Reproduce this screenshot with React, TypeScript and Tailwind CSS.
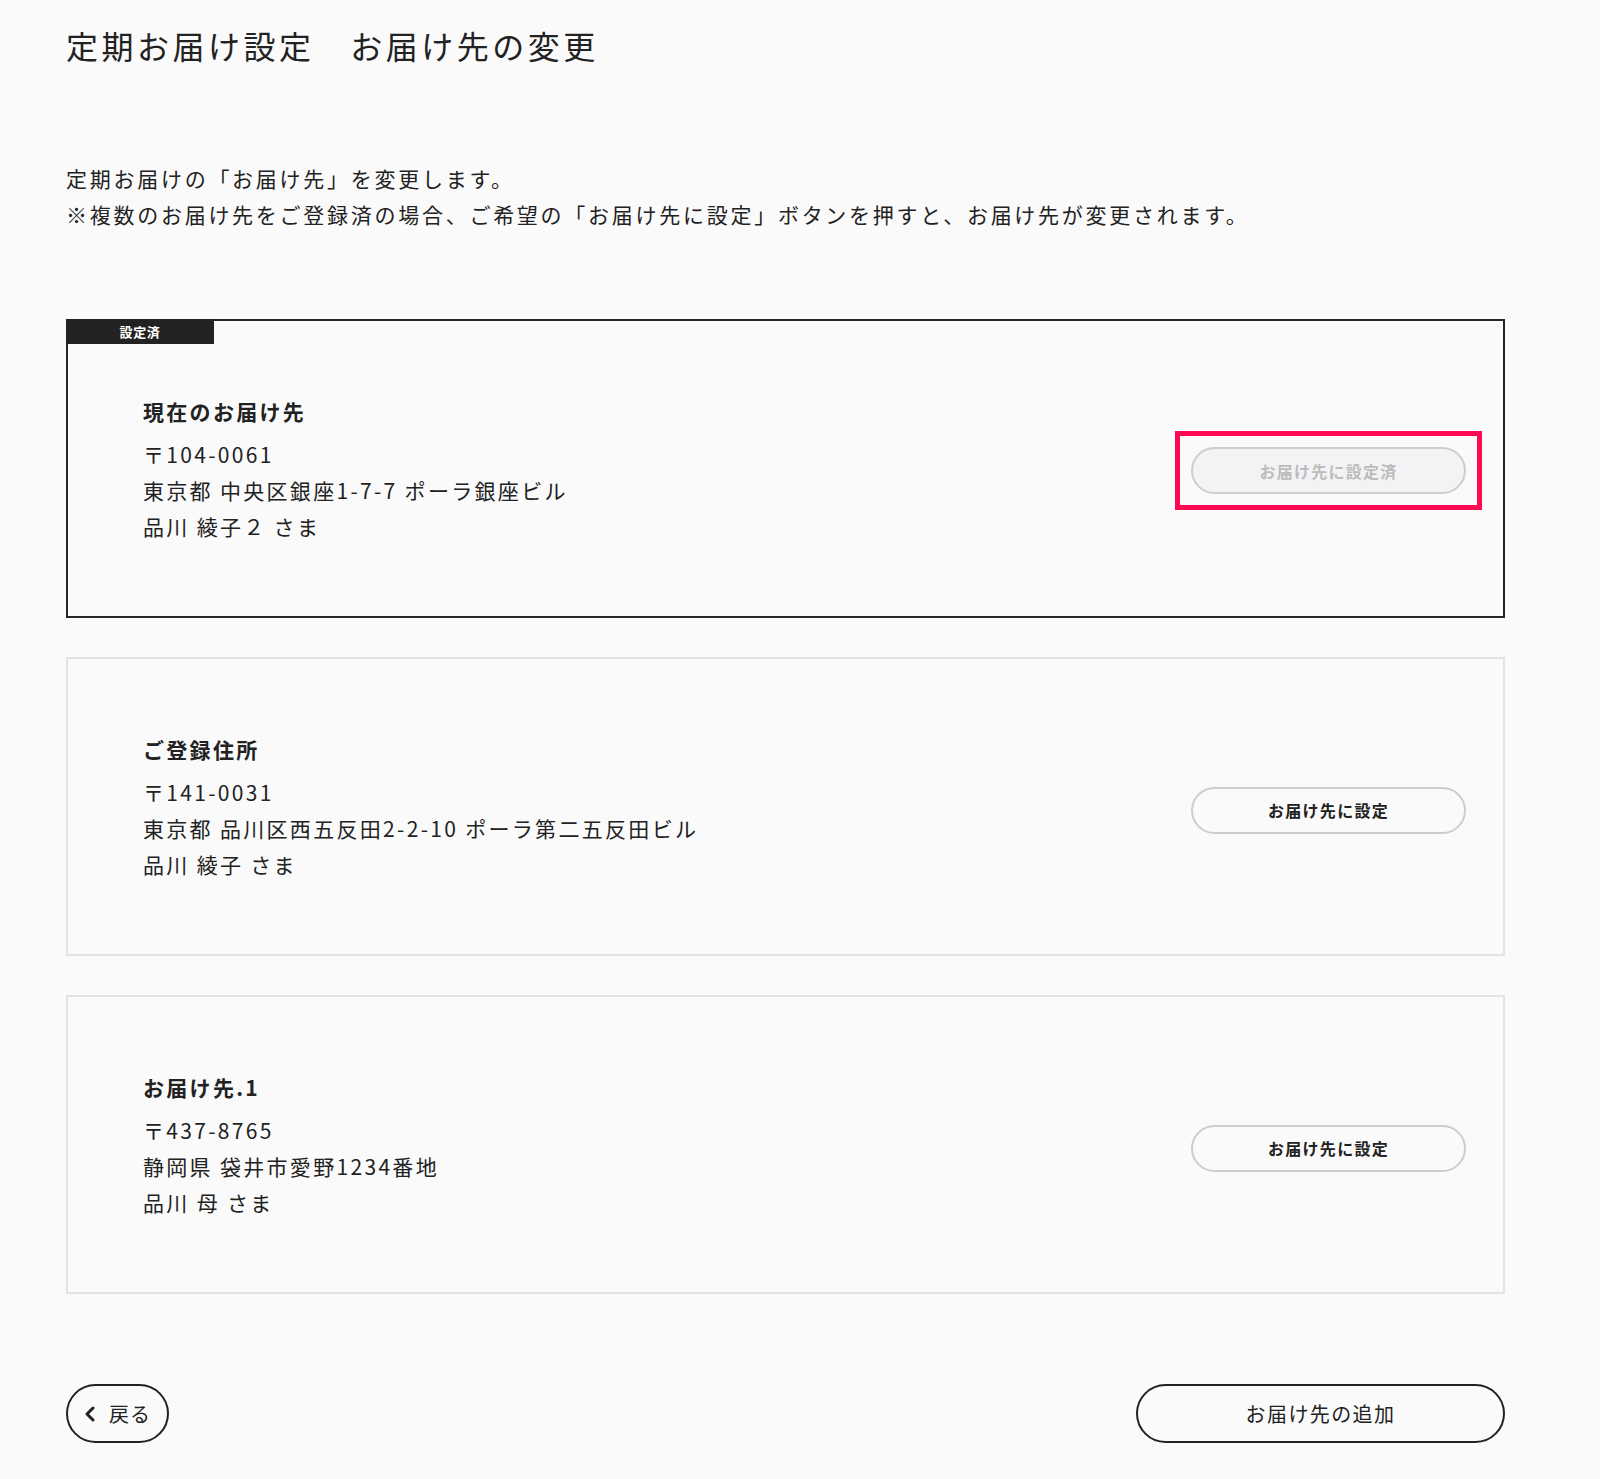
import React from "react";

type Address = {
  id: string;
  label: string;
  zip: string;
  address: string;
  name: string;
  current?: boolean;
};

const addresses: Address[] = [
  {
    id: "current",
    label: "現在のお届け先",
    zip: "〒104-0061",
    address: "東京都 中央区銀座1-7-7 ポーラ銀座ビル",
    name: "品川 綾子２ さま",
    current: true,
  },
  {
    id: "home",
    label: "ご登録住所",
    zip: "〒141-0031",
    address: "東京都 品川区西五反田2-2-10 ポーラ第二五反田ビル",
    name: "品川 綾子 さま",
  },
  {
    id: "dest1",
    label: "お届け先.1",
    zip: "〒437-8765",
    address: "静岡県 袋井市愛野1234番地",
    name: "品川 母 さま",
  },
];

function AddressCard({ item }: { item: Address }) {
  return (
    <div
      className={
        item.current
          ? "relative flex h-[299px] items-center justify-between border-2 border-[#262626] pl-[75px] pr-[37px]"
          : "relative flex h-[299px] items-center justify-between border-2 border-[#e3e3e3] pl-[75px] pr-[37px]"
      }
    >
      {item.current && (
        <div className="absolute -left-[2px] -top-[2px] flex h-[25px] w-[148px] items-center justify-center bg-[#222] text-[13px] font-bold leading-none tracking-[0.05em] text-white">
          設定済
        </div>
      )}
      <div className="text-[21px] leading-[36px] tracking-[0.11em]">
        <p className="mb-[7px] font-bold">{item.label}</p>
        <p>{item.zip}</p>
        <p>{item.address}</p>
        <p>{item.name}</p>
      </div>
      {item.current ? (
        <div className="mt-[4px] outline-solid outline-[length:5px] outline-offset-[11px] outline-[#ff0a52]">
          <button className="flex h-[47px] w-[275px] items-center justify-center rounded-full border-2 border-[#cdcdcd] bg-[#f3f3f5] text-[16px] font-bold tracking-[0.08em] text-[#bcbcbc]">
            お届け先に設定済
          </button>
        </div>
      ) : (
        <button className="mt-[7px] flex h-[47px] w-[275px] items-center justify-center rounded-full border-2 border-[#cdcdcd] bg-[#fafafa] text-[16px] font-bold tracking-[0.08em] text-[#222]">
          お届け先に設定
        </button>
      )}
    </div>
  );
}

export default function App() {
  return (
    <div
      className="min-h-[1479px] w-full bg-[#fafafa] text-[#222]"
      style={{ fontFamily: '"Noto Sans CJK JP", "Noto Sans", sans-serif' }}
    >
      <div className="w-[1505px] pl-[66px] pt-[22px] pb-[36px]">
        <h1 className="text-[32px] font-normal leading-[46px] tracking-[0.11em]">
          定期お届け設定　お届け先の変更
        </h1>

        <div className="mt-[92px] text-[21px] leading-[36px] tracking-[0.13em]">
          <p>定期お届けの「お届け先」を変更します。</p>
          <p>
            ※複数のお届け先をご登録済の場合、ご希望の「お届け先に設定」ボタンを押すと、お届け先が変更されます。
          </p>
        </div>

        <div className="mt-[87px] flex flex-col gap-[39px]">
          {addresses.map((a) => (
            <AddressCard key={a.id} item={a} />
          ))}
        </div>

        <div className="mt-[90px] flex items-center justify-between">
          <button className="flex h-[59px] w-[103px] items-center gap-[13px] rounded-full border-2 border-[#222] pl-[16px] text-[20px] tracking-[0.05em]">
            <svg width="12" height="16" viewBox="0 0 12 16" fill="none">
              <polyline
                points="9,2 3,8 9,14"
                stroke="#222"
                strokeWidth="3"
                strokeLinecap="round"
                strokeLinejoin="round"
              />
            </svg>
            戻る
          </button>
          <button className="flex h-[59px] w-[369px] items-center justify-center rounded-full border-2 border-[#222] text-[20px] tracking-[0.07em]">
            お届け先の追加
          </button>
        </div>
      </div>
    </div>
  );
}
